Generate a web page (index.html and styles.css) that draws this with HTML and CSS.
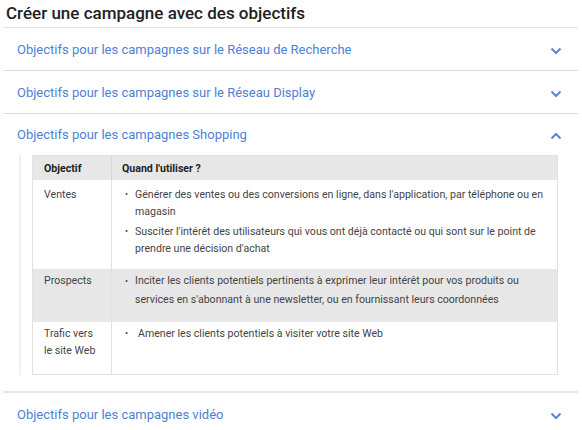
FILE: index.html
```html
<!DOCTYPE html>
<html lang="fr">
  <head>
    <meta charset="UTF-8" />
    <meta name="viewport" content="width=device-width, initial-scale=1.0" />
    <title>Créer une campagne avec des objectifs</title>
    <link rel="stylesheet" href="styles.css">
  </head>
  <body>
    <div class="page">
      <h2 class="title">Créer une campagne avec des objectifs</h2>

      <div class="item">
        <div class="item-head">
          <span>Objectifs pour les campagnes sur le Réseau de Recherche</span>
          <svg class="chev" width="12" height="8" viewBox="0 0 12 8"><path d="M1.5 1.5 L6 6 L10.5 1.5" /></svg>
        </div>
      </div>

      <div class="item">
        <div class="item-head">
          <span>Objectifs pour les campagnes sur le Réseau Display</span>
          <svg class="chev" width="12" height="8" viewBox="0 0 12 8"><path d="M1.5 1.5 L6 6 L10.5 1.5" /></svg>
        </div>
      </div>

      <div class="item open">
        <div class="item-head">
          <span>Objectifs pour les campagnes Shopping</span>
          <svg class="chev" width="12" height="8" viewBox="0 0 12 8"><path d="M1.5 6.5 L6 2 L10.5 6.5" /></svg>
        </div>
        <div class="item-body">
          <table class="goals">
            <thead>
              <tr>
                <th class="col-goal">Objectif</th>
                <th>Quand l'utiliser ?</th>
              </tr>
            </thead>
            <tbody>
              <tr>
                <td class="col-goal">Ventes</td>
                <td>
                  <ul>
                    <li>Générer des ventes ou des conversions en ligne, dans l'application, par téléphone ou en magasin</li>
                    <li>Susciter l'intérêt des utilisateurs qui vous ont déjà contacté ou qui sont sur le point de prendre une décision d'achat</li>
                  </ul>
                </td>
              </tr>
              <tr class="shaded">
                <td class="col-goal">Prospects</td>
                <td>
                  <ul>
                    <li>Inciter les clients potentiels pertinents à exprimer leur intérêt pour vos produits ou services en s'abonnant à une newsletter, ou en fournissant leurs coordonnées</li>
                  </ul>
                </td>
              </tr>
              <tr class="tall">
                <td class="col-goal">Trafic vers le site Web</td>
                <td>
                  <ul class="wide">
                    <li>Amener les clients potentiels à visiter votre site Web</li>
                  </ul>
                </td>
              </tr>
            </tbody>
          </table>
        </div>
      </div>

      <div class="item last">
        <div class="item-head">
          <span>Objectifs pour les campagnes vidéo</span>
          <svg class="chev" width="12" height="8" viewBox="0 0 12 8"><path d="M1.5 1.5 L6 6 L10.5 1.5" /></svg>
        </div>
      </div>
    </div>
  </body>
</html>
```

FILE: styles.css
```css
body {
  margin: 0;
  font-family: Roboto, "Noto Sans", Arial, sans-serif;
  background-color: #fff;
  color: #3c4043;
}
.page {
  margin: 0 4px 0 3px;
}
.title {
  margin: 0;
  height: 27px;
  padding-left: 3px;
  font-size: 17px;
  font-weight: 500;
  line-height: 26px;
  color: #202124;
  border-bottom: 1px solid #e3e3e3;
}
.item {
  border-bottom: 1px solid #dcdcdc;
}
.item-head {
  display: flex;
  justify-content: space-between;
  align-items: center;
  height: 42px;
  padding: 0 16px 0 14px;
  font-size: 13px;
  color: #4f7fd6;
}
.chev {
  margin-top: 3px;
}
.chev path {
  fill: none;
  stroke: #5a86d6;
  stroke-width: 2;
}
.item.open .item-head {
  height: 41px;
}
.item.open {
  border-bottom: 2px solid #e6e6e6;
}
.item-body {
  margin: 0 0 16px 16px;
  padding-left: 11px;
  border-left: 2px solid #efefef;
  width: 526px;
}
.goals {
  width: 526px;
  border-collapse: collapse;
  border: 1px solid #e2e2e2;
  font-size: 10.6px;
  color: #444;
}
.goals th {
  height: 24px;
  padding: 0 10px;
  text-align: left;
  font-weight: 700;
  color: #222;
  background-color: #e7e7e7;
}
.goals td {
  padding: 6px 10px 9px 10px;
  vertical-align: top;
  line-height: 17px;
}
.goals .col-goal {
  width: 57px;
  padding-left: 11px;
  border-right: 1px solid #e2e2e2;
}
.goals th.col-goal {
  border-right: 1px solid #d6d6d6;
}
.goals tr.shaded td {
  background-color: #e7e7e7;
  padding-top: 3px;
  padding-bottom: 10px;
  line-height: 18.5px;
}
.goals tr.tall td {
  padding-top: 3px;
  padding-bottom: 15px;
}
.goals ul {
  list-style: none;
  margin: 0;
  padding: 0;
}
.goals li {
  display: flex;
  margin-bottom: 3px;
}
.goals li::before {
  content: "\2022";
  flex: none;
  width: 10px;
  padding-left: 3px;
  font-size: 9px;
}
.goals ul.wide li::before {
  width: 13px;
}
```
